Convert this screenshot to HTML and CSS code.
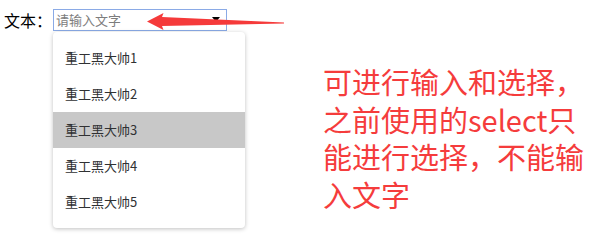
FILE: index.html
```html
<!DOCTYPE html>
<html>

<head>
	<meta charset="utf-8">
	<link rel="stylesheet" href="styles.css">
</head>

<body>
	<div class="page">
		<div class="field">
			<label class="field-label">文本：</label>
			<div class="combo">
				<div class="combo-input">
					<span class="placeholder">请输入文字</span>
					<span class="caret"></span>
				</div>
				<ul class="menu">
					<li class="menu-item">重工黑大帅1</li>
					<li class="menu-item">重工黑大帅2</li>
					<li class="menu-item selected">重工黑大帅3</li>
					<li class="menu-item">重工黑大帅4</li>
					<li class="menu-item">重工黑大帅5</li>
				</ul>
			</div>
		</div>
		<p class="note">可进行输入和选择，之前使用的select只能进行选择，不能输入文字</p>
		<svg class="arrow" width="600" height="40" viewBox="0 0 600 40">
			<polygon points="147,21.5 163.5,13 162,17 284,22.6 284,23.6 162,26 163.5,30" fill="#f53a3a" />
		</svg>
	</div>
</body>

</html>
```

FILE: styles.css
```css
body {
	margin: 0;
	background-color: #ffffff;
	font-family: "Noto Sans CJK SC", "Noto Sans", sans-serif;
}

.page {
	position: relative;
	display: flex;
	align-items: flex-start;
	width: 600px;
	height: 237px;
	overflow: hidden;
}

.field {
	display: flex;
	align-items: center;
	margin-top: 9px;
	padding-left: 4px;
}

.field-label {
	width: 48px;
	font-size: 16px;
	line-height: 22px;
	color: #000000;
}

.combo {
	position: relative;
	margin-left: 1px;
}

.combo-input {
	display: flex;
	align-items: center;
	justify-content: space-between;
	box-sizing: border-box;
	width: 174px;
	height: 22px;
	padding: 0 6px 0 2px;
	border: 1px solid #8aaae6;
}

.placeholder {
	font-size: 13px;
	line-height: 20px;
	color: #7d7d7d;
}

.caret {
	width: 0;
	height: 0;
	margin-top: -2px;
	border-left: 4px solid transparent;
	border-right: 4px solid transparent;
	border-top: 5px solid #000000;
}

.menu {
	position: absolute;
	top: 23px;
	left: 0;
	width: 192px;
	margin: 0;
	padding: 8px 0;
	list-style: none;
	background-color: #ffffff;
	border-radius: 4px;
	box-shadow: 0 1px 4px rgba(0, 0, 0, 0.25);
}

.menu-item {
	height: 36px;
	padding-left: 12px;
	font-size: 13px;
	line-height: 36px;
	color: #303133;
}

.menu-item.selected {
	background-color: #c8c8c8;
}

.note {
	width: 270px;
	margin: 63px 0 0 96px;
	font-size: 29px;
	line-height: 37.5px;
	color: #f53c3c;
}

.arrow {
	position: absolute;
	left: 0;
	top: 0;
}
```
